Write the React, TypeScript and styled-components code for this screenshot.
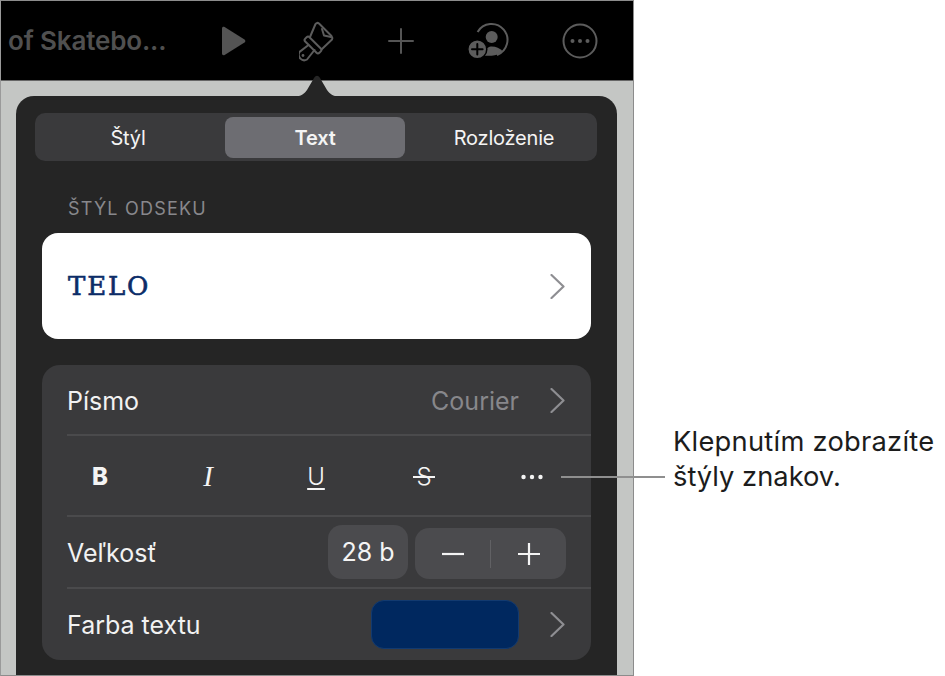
import styled, { createGlobalStyle } from 'styled-components';

const GlobalStyle = createGlobalStyle`
  html, body {
    margin: 0;
    padding: 0;
    background: #fff;
  }
  body {
    font-family: Inter, "Liberation Sans", sans-serif;
  }
`;

const Page = styled.div`
  position: relative;
  width: 945px;
  height: 676px;
  display: flex;
  overflow: hidden;
  background: #fff;
`;

const Device = styled.div`
  width: 634px;
  height: 676px;
  box-sizing: border-box;
  border: 1px solid #8c8c8c;
  border-left-color: #9a9a9a;
  display: flex;
  flex-direction: column;
  flex-shrink: 0;
  background: #c4c6c4;
`;

const Toolbar = styled.div`
  height: 80px;
  flex-shrink: 0;
  box-sizing: border-box;
  background: #000;
  border-bottom: 1px solid #666;
  display: flex;
  align-items: center;
  gap: 53px;
  padding-left: 7px;
  color: #555;
`;

const DocTitle = styled.div`
  width: 159px;
  font-size: 26px;
  font-weight: 600;
  letter-spacing: -0.15px;
  white-space: nowrap;
  color: #505050;
`;

const ToolIcon = styled.svg`
  display: block;
  flex-shrink: 0;
`;

const Backdrop = styled.div`
  flex: 1;
  min-height: 0;
  padding: 15px 16px 0 15px;
`;

const Popover = styled.div`
  position: relative;
  height: 579px;
  box-sizing: border-box;
  padding: 17px 26px 0 26px;
  background: #252525;
  border-radius: 18px 18px 0 0;
`;

const PopoverArrow = styled.svg`
  position: absolute;
  left: 279px;
  top: -21px;
  display: block;
`;

const Segments = styled.div`
  display: grid;
  grid-template-columns: 190px 180px 1fr;
  height: 48px;
  margin: 0 -6px 0 -7px;
  padding: 4px 0 3px;
  box-sizing: border-box;
  background: #3a3a3c;
  border-radius: 10px;
`;

const Segment = styled.div<{ $active?: boolean; $nudge?: number }>`
  display: flex;
  align-items: center;
  justify-content: center;
  font-size: 20px;
  font-weight: ${(p) => (p.$active ? 600 : 400)};
  letter-spacing: -0.2px;
  color: #f4f4f4;
  border-radius: 8px;
  padding-left: ${(p) => Math.max(p.$nudge ?? 0, 0)}px;
  padding-right: ${(p) => Math.max(-(p.$nudge ?? 0), 0)}px;
  background: ${(p) => (p.$active ? '#6d6d72' : 'transparent')};
`;

const SectionLabel = styled.div`
  margin: 37px 0 0 26px;
  height: 21px;
  line-height: 21px;
  font-size: 18px;
  letter-spacing: 1.2px;
  color: #88888c;
`;

const StyleCard = styled.div`
  height: 106px;
  margin-top: 14px;
  box-sizing: border-box;
  padding: 0 26px;
  display: flex;
  align-items: center;
  justify-content: space-between;
  background: #fff;
  border-radius: 16px;
`;

const StyleName = styled.span`
  font-family: "DejaVu Serif", "Liberation Serif", serif;
  font-size: 26px;
  letter-spacing: 1.8px;
  color: #0c2c68;
  -webkit-text-stroke: 0.6px #0c2c68;
`;

const Group = styled.div`
  height: 295px;
  margin-top: 26px;
  padding-left: 25px;
  box-sizing: border-box;
  background: #3a3a3c;
  border-radius: 18px;
`;

const Row = styled.div<{ $height: number; $last?: boolean }>`
  height: ${(p) => p.$height}px;
  box-sizing: border-box;
  padding-right: 26px;
  padding-top: ${(p) => (p.$last ? 0 : 2)}px;
  display: flex;
  align-items: center;
  justify-content: space-between;
  border-bottom: ${(p) => (p.$last ? 'none' : '2px solid #4a4a4c')};
`;

const RowLabel = styled.span`
  font-size: 25px;
  color: #f2f2f2;
`;

const RowValue = styled.div`
  display: flex;
  align-items: center;
  gap: 31px;
`;

const ValueText = styled.span`
  font-size: 25px;
  color: #87878b;
`;

const FormatRow = styled(Row)`
  justify-content: flex-start;
  gap: 86px;
  padding-left: 22px;
`;

const FormatButton = styled.span<{ $bold?: boolean; $italic?: boolean; $under?: boolean; $strike?: boolean }>`
  position: relative;
  width: 22px;
  display: flex;
  justify-content: center;
  font-size: ${(p) => (p.$italic ? 29 : 24)}px;
  line-height: 29px;
  color: #f4f4f4;
  font-family: ${(p) => (p.$italic ? '"Liberation Serif", serif' : 'inherit')};
  font-weight: ${(p) => (p.$bold ? 800 : p.$under || p.$strike ? 300 : 400)};
  font-style: ${(p) => (p.$italic ? 'italic' : 'normal')};
  text-decoration: ${(p) => (p.$under ? 'underline' : 'none')};
  text-decoration-thickness: 2px;
  text-underline-offset: 3px;
  ${(p) =>
    p.$strike &&
    `
    &::after {
      content: '';
      position: absolute;
      left: 0;
      right: 0;
      top: 14px;
      height: 2px;
      background: #f4f4f4;
    }
  `}
`;

const SizeControls = styled.div`
  display: flex;
  align-items: center;
  gap: 7px;
  margin: -2px -1px 0 0;
`;

const SizeValue = styled.div`
  width: 80px;
  height: 54px;
  display: flex;
  align-items: center;
  justify-content: center;
  font-size: 25px;
  color: #f4f4f4;
  background: #4b4b4e;
  border-radius: 14px;
`;

const Stepper = styled.div`
  width: 151px;
  height: 51px;
  margin-top: 3px;
  display: grid;
  grid-template-columns: 1fr 1fr;
  align-items: center;
  justify-items: center;
  background: #4b4b4e;
  border-radius: 14px;
`;

const StepButton = styled.div<{ $divided?: boolean }>`
  width: 100%;
  height: 28px;
  display: flex;
  align-items: center;
  justify-content: center;
  border-left: ${(p) => (p.$divided ? '1px solid #616164' : 'none')};
`;

const Swatch = styled.div`
  width: 148px;
  height: 49px;
  box-sizing: border-box;
  background: #00285f;
  border: 1px solid #123a70;
  border-radius: 13px;
`;

const Callout = styled.div`
  margin: 424px 0 0 39px;
  font-size: 27.3px;
  line-height: 35px;
  color: #1c1c1c;
  white-space: nowrap;
`;

const CalloutLine = styled.div<{ $spread?: number }>`
  letter-spacing: ${(p) => p.$spread ?? 0}px;
`;

const Leader = styled.div`
  position: absolute;
  left: 561px;
  top: 476px;
  width: 104px;
  height: 2px;
  background: #8f8f8f;
`;

const Chevron = () => (
  <svg width="15" height="25" viewBox="0 0 15 25" fill="none">
    <path d="M1.5 1 L13.5 12.5 L1.5 24" stroke="#8e8e92" strokeWidth="2.2" strokeLinecap="round" strokeLinejoin="round" />
  </svg>
);

const PlayIcon = () => (
  <ToolIcon width="26" height="30" viewBox="0 0 26 30">
    <path d="M2 2.5 C2 1 3.4 .4 4.6 1.1 L24.5 13.4 C25.6 14.1 25.6 15.9 24.5 16.6 L4.6 28.9 C3.4 29.6 2 29 2 27.5 Z" fill="#545454" />
  </ToolIcon>
);

const BrushIcon = () => (
  <ToolIcon width="36" height="42" viewBox="14 9 36 42" fill="none">
    <g stroke="#5c5c5c" strokeWidth="2" strokeLinejoin="round" strokeLinecap="round">
      <path d="M25 26 L30.5 13 Q32 11 34 12.5 L46.5 25 Q48 27 47 28.5 L37 38" />
      <path d="M37 18 L39 24.5 L46 26" />
      <rect x="18" y="31" width="20" height="6" rx="2" transform="rotate(45 28 34)" />
      <path d="M23.5 34 L14.5 41 A5.5 5.5 0 0 0 22 48.5 L29.5 39" />
    </g>
    <circle cx="18" cy="44.5" r="1.4" fill="#5c5c5c" />
  </ToolIcon>
);

const PlusIcon = () => (
  <ToolIcon width="26" height="26" viewBox="0 0 26 26">
    <path d="M13 1 V25 M1 13 H25" stroke="#555" strokeWidth="2" strokeLinecap="round" />
  </ToolIcon>
);

const CollabIcon = () => (
  <ToolIcon width="42" height="38" viewBox="0 0 42 38" fill="none">
    <path d="M10.6 10 A16 16 0 1 1 30 33" stroke="#5c5c5c" strokeWidth="2" />
    <circle cx="24.7" cy="15" r="6" fill="#5c5c5c" />
    <path d="M17 31 C19 26 22 24.5 24.7 24.5 C29 24.5 33 26.5 35.5 29 A16 16 0 0 1 24.7 33.7 L17 33.7 Z" fill="#5c5c5c" />
    <circle cx="10.3" cy="27.3" r="9.5" fill="#5c5c5c" stroke="#000" strokeWidth="1.5" />
    <path d="M10.3 22 V32.6 M5 27.3 H15.6" stroke="#000" strokeWidth="2" strokeLinecap="round" />
  </ToolIcon>
);

const MoreIcon = () => (
  <ToolIcon width="36" height="36" viewBox="0 0 36 36" fill="none">
    <circle cx="18" cy="18" r="16.5" stroke="#5c5c5c" strokeWidth="2" />
    <circle cx="10.5" cy="18" r="2" fill="#5c5c5c" />
    <circle cx="18" cy="18" r="2" fill="#5c5c5c" />
    <circle cx="25.5" cy="18" r="2" fill="#5c5c5c" />
  </ToolIcon>
);

const DotsIcon = () => (
  <svg width="26" height="6" viewBox="0 0 26 6">
    <circle cx="3" cy="3" r="2.6" fill="#f4f4f4" />
    <circle cx="13" cy="3" r="2.6" fill="#f4f4f4" />
    <circle cx="23" cy="3" r="2.6" fill="#f4f4f4" />
  </svg>
);

const StepGlyph = ({ plus }: { plus?: boolean }) => (
  <svg width="24" height="24" viewBox="0 0 24 24">
    <path d={plus ? 'M1 12 H23 M12 1 V23' : 'M1 12 H23'} stroke="#f4f4f4" strokeWidth="2.2" />
  </svg>
);

export default function App() {
  return (
    <Page>
      <GlobalStyle />
      <Device>
        <Toolbar>
          <DocTitle>of Skatebo...</DocTitle>
          <PlayIcon />
          <BrushIcon />
          <PlusIcon />
          <CollabIcon />
          <MoreIcon />
        </Toolbar>
        <Backdrop>
          <Popover>
            <PopoverArrow width="44" height="22" viewBox="0 0 44 22">
              <path d="M0 22 C6 21 9 19 12 15 L19 3 C21 0 23 0 25 3 L32 15 C35 19 38 21 44 22 Z" fill="#252525" />
            </PopoverArrow>
            <Segments>
              <Segment $nudge={-4}>Štýl</Segment>
              <Segment $active>Text</Segment>
              <Segment $nudge={6}>Rozloženie</Segment>
            </Segments>
            <SectionLabel>ŠTÝL ODSEKU</SectionLabel>
            <StyleCard>
              <StyleName>TELO</StyleName>
              <Chevron />
            </StyleCard>
            <Group>
              <Row $height={71}>
                <RowLabel>Písmo</RowLabel>
                <RowValue>
                  <ValueText>Courier</ValueText>
                  <Chevron />
                </RowValue>
              </Row>
              <FormatRow $height={81}>
                <FormatButton $bold>B</FormatButton>
                <FormatButton $italic>I</FormatButton>
                <FormatButton $under>U</FormatButton>
                <FormatButton $strike>S</FormatButton>
                <FormatButton><DotsIcon /></FormatButton>
              </FormatRow>
              <Row $height={72}>
                <RowLabel>Veľkosť</RowLabel>
                <SizeControls>
                  <SizeValue>28 b</SizeValue>
                  <Stepper>
                    <StepButton><StepGlyph /></StepButton>
                    <StepButton $divided><StepGlyph plus /></StepButton>
                  </Stepper>
                </SizeControls>
              </Row>
              <Row $height={71} $last>
                <RowLabel>Farba textu</RowLabel>
                <RowValue>
                  <Swatch />
                  <Chevron />
                </RowValue>
              </Row>
            </Group>
          </Popover>
        </Backdrop>
      </Device>
      <Leader />
      <Callout>
        <CalloutLine $spread={0.25}>Klepnutím zobrazíte</CalloutLine>
        <CalloutLine>štýly znakov.</CalloutLine>
      </Callout>
    </Page>
  );
}
